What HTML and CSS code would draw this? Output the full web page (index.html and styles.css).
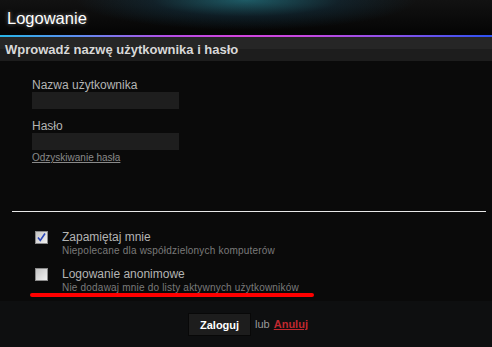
FILE: index.html
```html
<!DOCTYPE html>
<html lang="pl">
<head>
<meta charset="utf-8">
<title>Logowanie</title>
<link rel="stylesheet" href="styles.css">
</head>
<body>
<div class="dialog">
  <header class="title-bar">
    <h1 class="title">Logowanie</h1>
  </header>
  <div class="accent-line"></div>
  <div class="subheader">Wprowadź nazwę użytkownika i hasło</div>
  <main class="content">
    <div class="fields">
      <label class="field-label">Nazwa użytkownika</label>
      <div class="input"></div>
      <label class="field-label second">Hasło</label>
      <div class="input"></div>
      <a class="recover" href="#">Odzyskiwanie hasła</a>
    </div>
    <hr class="separator">
    <div class="options">
      <div class="option">
        <span class="checkbox checked">
          <svg width="11" height="11" viewBox="0 0 11 11"><path d="M2 5.5 L4.3 8.5 L9 1.5" fill="none" stroke="#2a46b8" stroke-width="1.6"/></svg>
        </span>
        <div class="option-text">
          <div class="option-title">Zapamiętaj mnie</div>
          <div class="option-hint">Niepolecane dla współdzielonych komputerów</div>
        </div>
      </div>
      <div class="option second">
        <span class="checkbox"></span>
        <div class="option-text">
          <div class="option-title">Logowanie anonimowe</div>
          <div class="option-hint">Nie dodawaj mnie do listy aktywnych użytkowników</div>
        </div>
      </div>
      <div class="annotation"></div>
    </div>
  </main>
  <footer class="actions">
    <button class="submit">Zaloguj</button>
    <span class="or">lub</span>
    <a class="cancel" href="#">Anuluj</a>
  </footer>
</div>
</body>
</html>
```
FILE: styles.css
```css
* { box-sizing: border-box; }
html, body {
  margin: 0;
  padding: 0;
  background: #0a0a0a;
}
body {
  width: 492px;
  height: 347px;
  overflow: hidden;
  font-family: "Liberation Sans", Arial, sans-serif;
}
.dialog {
  display: flex;
  flex-direction: column;
  height: 347px;
}
.title-bar {
  height: 35px;
  background:
    radial-gradient(ellipse 170px 30px at 246px 0px, rgba(40,150,170,0.55), rgba(20,80,110,0.25) 55%, rgba(0,0,0,0) 100%),
    linear-gradient(#121212, #040404);
  display: flex;
  align-items: flex-start;
  padding-left: 7px;
}
.title {
  margin: 0;
  padding-top: 9px;
  font-size: 16.5px;
  line-height: 19px;
  font-weight: normal;
  color: #ffffff;
  text-shadow: 0 0 4px rgba(255,255,255,0.45);
}
.accent-line {
  height: 2px;
  background: linear-gradient(90deg, #28b4e6 0%, #5e8cf0 16%, #b44ee6 34%, #d244dc 48%, #c648e0 62%, #8a52ea 80%, #2c52f2 100%);
}
.subheader {
  height: 24px;
  background: linear-gradient(#262626 0, #262626 50%, #1d1d1d 50%, #1d1d1d 100%);
  color: #d8d8d8;
  font-size: 13px;
  font-weight: bold;
  line-height: 15px;
  padding: 5px 0 0 5px;
}
.content {
  flex: 1;
  position: relative;
  background: #0a0a0a;
}
.fields {
  display: flex;
  flex-direction: column;
  align-items: flex-start;
  padding: 18px 0 0 32px;
}
.field-label {
  font-size: 12px;
  line-height: 13px;
  color: #b4b4b4;
}
.field-label.second { margin-top: 11px; }
.input {
  width: 147px;
  height: 17px;
  background: #1e1e1e;
}
.recover {
  margin-top: 2px;
  font-size: 10px;
  line-height: 12px;
  color: #8a8a8a;
  text-decoration: underline;
}
.separator {
  margin: 47px 6px 0 12px;
  border: 0;
  height: 1px;
  background: #e8e8e8;
}
.options {
  position: relative;
  padding: 18px 0 0 35px;
}
.option {
  display: flex;
  align-items: flex-start;
  gap: 14px;
}
.option.second { margin-top: 10px; }
.checkbox {
  width: 13px;
  height: 13px;
  margin-top: 1px;
  border: 1px solid #8a8a8a;
  background: linear-gradient(135deg, #c4c4c4, #f0f0f0);
  display: flex;
  align-items: center;
  justify-content: center;
}
.option-text {
  display: flex;
  flex-direction: column;
}
.option-title {
  font-size: 12px;
  line-height: 14px;
  color: #b4b4b4;
}
.option-hint {
  font-size: 10px;
  line-height: 13px;
  letter-spacing: 0.2px;
  color: #7a7a7a;
}
.annotation {
  position: absolute;
  left: 30px;
  top: 81px;
  width: 284px;
  height: 4px;
  border-radius: 2px;
  background: #ff0000;
}
.actions {
  height: 46px;
  background: #0e0f10;
  display: flex;
  align-items: flex-start;
  justify-content: center;
  padding: 12px 0 0 4px;
  gap: 4px;
}
.submit {
  width: 63px;
  height: 23px;
  margin: 0;
  padding: 0;
  background: #1d1d1d;
  border: 1px solid #080808;
  color: #ffffff;
  font-family: "Liberation Sans", Arial, sans-serif;
  font-size: 11px;
  font-weight: bold;
}
.or {
  font-size: 11px;
  line-height: 23px;
  color: #9a9a9a;
}
.cancel {
  font-size: 11px;
  line-height: 23px;
  font-weight: bold;
  color: #c0282f;
  text-decoration: underline;
}
```
